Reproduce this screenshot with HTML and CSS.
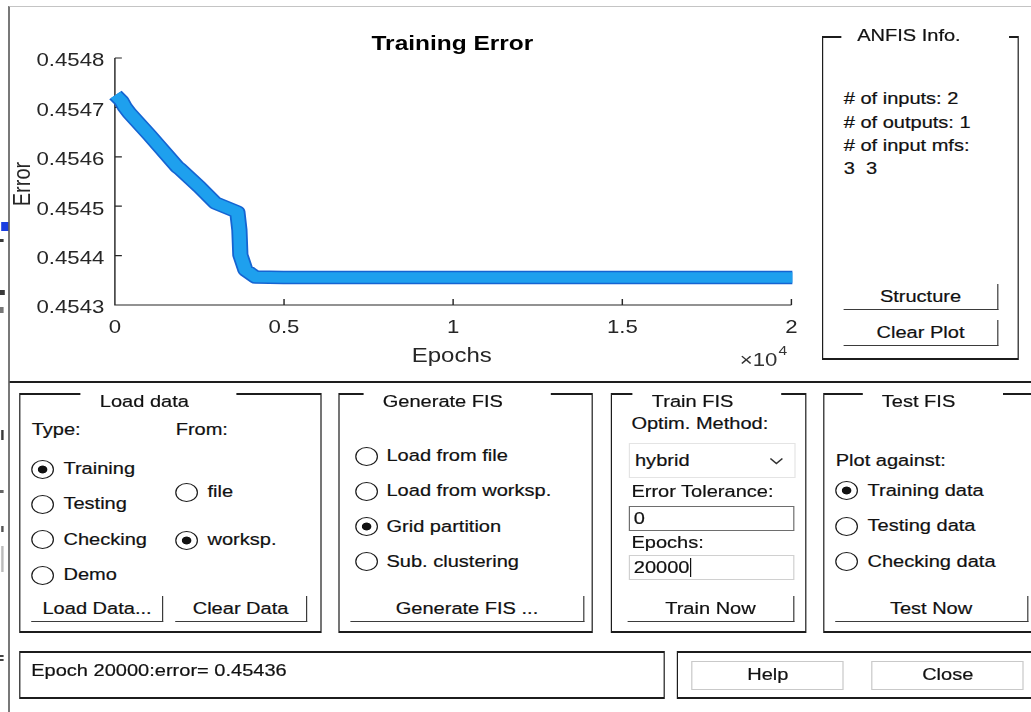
FILE: index.html
```html
<!DOCTYPE html>
<html lang="en">
<head>
<meta charset="utf-8">
<title>Neuro-Fuzzy Designer</title>
<link rel="stylesheet" href="styles.css">
</head>
<body>
<div class="screen">
  <!-- edge of the window underneath -->
  <div class="gutter" aria-hidden="true">
    <span class="mark mark--blue"></span>
    <span class="mark mark--a"></span>
    <span class="mark mark--b"></span>
    <span class="mark mark--c"></span>
    <span class="mark mark--d"></span>
    <span class="mark mark--e"></span>
    <span class="mark mark--f"></span>
    <span class="mark mark--g"></span>
    <span class="mark mark--h"></span>
  </div>

  <div class="window">
    <div class="upper">
      <svg class="plot" width="672" height="374" viewBox="0 0 672 374" role="img" aria-label="Training error plot">
        <text class="plot-title" x="369" y="43" text-anchor="middle">Training Error</text>
        <g class="axis">
          <path d="M87.75 51 V298 H651.5"/>
          <path d="M87.75 51 h5.8 M87.75 100.4 h5.8 M87.75 149.8 h5.8 M87.75 199.2 h5.8 M87.75 248.6 h5.8 M228.7 298 v-6 M369.6 298 v-6 M510.6 298 v-6 M651.5 298 v-6"/>
        </g>
        <g class="tick-labels" text-anchor="end">
          <text x="79" y="59.5">0.4548</text>
          <text x="79" y="108.9">0.4547</text>
          <text x="79" y="158.3">0.4546</text>
          <text x="79" y="207.7">0.4545</text>
          <text x="79" y="257.1">0.4544</text>
          <text x="79" y="306.5">0.4543</text>
        </g>
        <g class="tick-labels" text-anchor="middle">
          <text x="87.75" y="326">0</text>
          <text x="228.7" y="326">0.5</text>
          <text x="369.6" y="326">1</text>
          <text x="510.6" y="326">1.5</text>
          <text x="651.5" y="326">2</text>
        </g>
        <text class="axis-label" x="368.5" y="355" text-anchor="middle">Epochs</text>
        <text class="axis-label" transform="translate(16.8 177) rotate(-90)" text-anchor="middle">Error</text>
        <text class="exponent" x="639.8" y="359" text-anchor="end">×10</text>
        <text class="exponent-power" x="640.7" y="348">4</text>
        <path class="curve-edge" d="M88.2 88 L93.2 94 L96 100 L99.8 106 L116.5 128 L139.8 160 L142 162 L158.2 180 L171.5 196 L189.8 205 L191.5 223 L192.3 248 L196.5 263 L204.8 270 L228.2 270.5 L652.3 270.5"/>
        <path class="curve" d="M88.2 88 L93.2 94 L96 100 L99.8 106 L116.5 128 L139.8 160 L142 162 L158.2 180 L171.5 196 L189.8 205 L191.5 223 L192.3 248 L196.5 263 L204.8 270 L228.2 270.5 L652.3 270.5"/>
      </svg>

      <section class="panel info-panel">
        <span class="panel-title">ANFIS Info.</span>
        <div class="info-text">
          <div># of inputs: 2</div>
          <div># of outputs: 1</div>
          <div># of input mfs:</div>
          <div>3&nbsp;&nbsp;3</div>
        </div>
        <div class="info-actions">
          <button class="btn btn--info" type="button">Structure</button>
          <button class="btn btn--info" type="button">Clear Plot</button>
        </div>
      </section>
    </div>

    <div class="lower">
      <div class="panels">
        <section class="panel load-panel">
          <span class="panel-title">Load data</span>
          <div class="load-body">
            <div class="load-col">
              <span class="caption">Type:</span>
              <div class="radio-list type-list">
                <span class="radio is-on">Training</span>
                <span class="radio">Testing</span>
                <span class="radio">Checking</span>
                <span class="radio">Demo</span>
              </div>
            </div>
            <div class="load-col">
              <span class="caption">From:</span>
              <div class="radio-list source-list">
                <span class="radio">file</span>
                <span class="radio is-on">worksp.</span>
              </div>
            </div>
          </div>
          <div class="actions load-actions">
            <button class="btn btn--load" type="button">Load Data...</button>
            <button class="btn btn--clear" type="button">Clear Data</button>
          </div>
        </section>

        <section class="panel gen-panel">
          <span class="panel-title">Generate FIS</span>
          <div class="radio-list gen-list">
            <span class="radio">Load from file</span>
            <span class="radio">Load from worksp.</span>
            <span class="radio is-on">Grid partition</span>
            <span class="radio">Sub. clustering</span>
          </div>
          <div class="actions gen-actions">
            <button class="btn btn--gen" type="button">Generate FIS ...</button>
          </div>
        </section>

        <section class="panel train-panel">
          <span class="panel-title">Train FIS</span>
          <div class="train-body">
            <span class="caption">Optim. Method:</span>
            <div class="select">
              <span>hybrid</span>
              <svg class="chevron" width="12" height="8" viewBox="0 0 12 8" aria-hidden="true"><polyline points="1,1.5 6,6.5 11,1.5"/></svg>
            </div>
            <span class="caption caption--gap">Error Tolerance:</span>
            <div class="field field--dark">0</div>
            <span class="caption caption--close">Epochs:</span>
            <div class="field field--light">20000<span class="caret"></span></div>
          </div>
          <div class="actions train-actions">
            <button class="btn btn--train" type="button">Train Now</button>
          </div>
        </section>

        <section class="panel test-panel">
          <span class="panel-title">Test FIS</span>
          <div class="test-body">
            <span class="caption">Plot against:</span>
            <div class="radio-list test-list">
              <span class="radio is-on">Training data</span>
              <span class="radio">Testing data</span>
              <span class="radio">Checking data</span>
            </div>
          </div>
          <div class="actions test-actions">
            <button class="btn btn--test" type="button">Test Now</button>
          </div>
        </section>
      </div>

      <div class="footer">
        <div class="status">Epoch 20000:error= 0.45436</div>
        <div class="dialog-actions">
          <button class="btn-flat" type="button">Help</button>
          <button class="btn-flat" type="button">Close</button>
        </div>
      </div>
    </div>
  </div>
</div>
</body>
</html>
```

FILE: styles.css
```css
* {
  box-sizing: border-box;
}

html,
body {
  margin: 0;
  padding: 0;
  background: #fff;
}

body {
  width: 1031px;
  height: 712px;
  overflow: hidden;
  font-family: "Liberation Sans", Arial, Helvetica, sans-serif;
  font-size: 16.7px;
  color: #111;
}

/* the dialog is drawn on a 1.2x horizontally stretched canvas */
.screen {
  width: 859.2px;
  height: 712px;
  padding-top: 6px;
  display: flex;
  transform: scaleX(1.2);
  transform-origin: 0 0;
}

/* sliver of the window behind, along the left edge */
.gutter {
  flex: none;
  width: 7px;
  display: flex;
  flex-direction: column;
  align-items: flex-start;
}

.mark {
  display: block;
  flex: none;
  background: #3a3a3a;
}

.mark--blue { margin-top: 216px; width: 5.6px; height: 9px; margin-left: 1px; background: #1a3ee0; }
.mark--a { margin-top: 8px; width: 3px; height: 3px; }
.mark--b { margin-top: 48px; width: 4px; height: 5px; }
.mark--c { margin-top: 12px; width: 3px; height: 6px; background: #777; }
.mark--d { margin-top: 117px; width: 2px; height: 10px; margin-left: 1px; }
.mark--e { margin-top: 50px; width: 3px; height: 3px; background: #666; }
.mark--f { margin-top: 33px; width: 2px; height: 6px; margin-left: 1px; background: #555; }
.mark--g { margin-top: 14px; width: 2px; height: 26px; margin-left: 1px; background: #bbb; }
.mark--h { margin-top: 83px; width: 3px; height: 6px; border-top: 2px solid #444; border-bottom: 2px solid #444; background: transparent; }

.window {
  flex: 1;
  height: 706px;
  border-top: 1px solid #c4c4c4;
  border-left: 1.5px solid #1e1e1e;
  display: flex;
  flex-direction: column;
  -webkit-text-stroke: 0.2px #111;
}

.upper {
  flex: none;
  height: 376px;
  border-bottom: 2px solid #1e1e1e;
  display: flex;
  align-items: flex-start;
}

/* ---------- plot ---------- */
.plot {
  flex: none;
  display: block;
  overflow: visible;
  font-family: "Liberation Sans", Arial, Helvetica, sans-serif;
  -webkit-text-stroke: 0;
}

.plot-title {
  font-size: 20.4px;
  font-weight: bold;
  fill: #000;
}

.axis path {
  fill: none;
  stroke: #262626;
  stroke-width: 1.2;
}

.tick-labels text {
  font-size: 18.5px;
  fill: #262626;
}

.axis-label {
  font-size: 20px;
  fill: #262626;
}

.exponent {
  font-size: 18.5px;
  fill: #333;
}

.exponent-power {
  font-size: 13px;
  fill: #333;
}

.curve-edge,
.curve {
  fill: none;
  stroke-linejoin: round;
  stroke-linecap: butt;
}

.curve-edge {
  stroke: #1564d2;
  stroke-width: 13.5;
}

.curve {
  stroke: #1ea0ee;
  stroke-width: 10.5;
}

/* ---------- group boxes ---------- */
.panel {
  position: relative;
  border: 2px solid #1c1c1c;
  border-left-width: 1.6px;
  border-right-width: 1.6px;
  display: flex;
  flex-direction: column;
  background: #fff;
}

.panel-title {
  position: absolute;
  top: -2px;
  background: #fff;
  padding: 0 40px 0 16px;
  line-height: 18px;
  white-space: nowrap;
}

.info-panel .panel-title {
  top: -11px;
  left: 15px;
  padding-left: 13px;
}

.load-panel .panel-title { left: 50px; }
.gen-panel .panel-title { left: 20px; }
.train-panel .panel-title { left: 17.5px; }
.test-panel .panel-title { left: 31.7px; }

.caption {
  display: block;
  height: 20px;
  line-height: 20px;
  white-space: nowrap;
}

.radio-list {
  display: flex;
  flex-direction: column;
}

.radio {
  display: flex;
  align-items: center;
  gap: 7.5px;
  height: 35.3px;
  line-height: 20px;
  white-space: nowrap;
}

.radio::before {
  content: "";
  flex: none;
  width: 17px;
  height: 17px;
  border: 1.5px solid #1a1a1a;
  border-radius: 50%;
  background: #fff;
}

.radio.is-on::before {
  background: radial-gradient(circle, #111 0 3.6px, #fff 4.3px);
}

.actions {
  margin-top: auto;
  display: flex;
  padding-bottom: 9px;
}

.btn {
  flex: none;
  height: 26px;
  margin: 0;
  padding: 0;
  border: 0;
  border-right: 1.5px solid #3b3b3b;
  border-bottom: 1.5px solid #3b3b3b;
  background: #fff;
  font: inherit;
  color: #111;
  line-height: 20px;
  text-align: center;
}

/* ANFIS info */
.info-panel {
  flex: none;
  width: 164.2px;
  height: 324px;
  margin: 29px 0 0 5.3px;
  padding: 49.3px 0 12px 16.8px;
}

.info-text {
  line-height: 23.3px;
}

.info-text div {
  white-space: nowrap;
}

.info-actions {
  margin-top: auto;
  display: flex;
  flex-direction: column;
  gap: 10px;
}

.btn--info {
  width: 129px;
}

/* ---------- lower area ---------- */
.lower {
  flex: 1;
  padding: 10px 0 0 8.2px;
}

.panels {
  display: grid;
  grid-template-columns: 251.6px 212.5px 163.3px 177px;
  column-gap: 14.2px;
  height: 240px;
}

/* Load data */
.load-body {
  display: grid;
  grid-template-columns: 120px 1fr;
  padding: 25px 0 0 9.2px;
}

.type-list {
  margin-top: 11.5px;
}

.source-list {
  margin-top: 34.4px;
  gap: 12.7px;
}

.load-actions {
  gap: 9.2px;
  padding-left: 9.2px;
}

.btn--load { width: 110px; }
.btn--clear { width: 110.8px; }

/* Generate FIS */
.gen-list {
  padding: 43.4px 0 0 12.6px;
}

.gen-actions {
  padding-left: 9.2px;
}

.btn--gen { width: 195px; }

/* Train FIS */
.train-body {
  display: flex;
  flex-direction: column;
  padding: 19px 0 0 14.5px;
}

.train-body .caption {
  padding-left: 2px;
}

.caption--gap { margin-top: 4px; }
.caption--close { margin-top: 2px; }

.select {
  margin-top: 9px;
  width: 138.4px;
  height: 35px;
  border: 1px solid #e4e4e4;
  display: flex;
  align-items: center;
  justify-content: space-between;
  padding: 0 9px 0 4px;
}

.chevron polyline {
  fill: none;
  stroke: #333;
  stroke-width: 1.3;
}

.field {
  width: 137.5px;
  height: 25px;
  display: flex;
  align-items: center;
  padding-left: 3px;
  background: #fff;
}

.field--dark {
  margin-top: 4px;
  border: 1.5px solid #6e6e6e;
}

.field--light {
  margin-top: 2px;
  border: 1.5px solid #d0d0d0;
}

.caret {
  width: 1px;
  height: 19px;
  background: #111;
  margin-left: 0.5px;
}

.train-actions {
  padding-left: 13.4px;
}

.btn--train { width: 139px; }

/* Test FIS */
.test-body {
  padding: 56px 0 0 9.3px;
}

.test-list {
  margin-top: 2.3px;
}

.test-actions {
  padding-left: 8.4px;
}

.btn--test { width: 161.7px; }

/* ---------- footer ---------- */
.footer {
  display: flex;
  gap: 10px;
  margin-top: 18px;
  height: 48px;
}

.status {
  flex: none;
  width: 537.5px;
  height: 48px;
  border: 2px solid #1c1c1c;
  border-left-width: 1.6px;
  border-right-width: 1.6px;
  padding: 8px 0 0 8.8px;
  line-height: 20px;
}

.dialog-actions {
  flex: none;
  width: 300px;
  height: 48px;
  border: 2px solid #1c1c1c;
  border-left-width: 1.6px;
  border-right-width: 1.6px;
  display: flex;
  align-items: center;
  gap: 23.3px;
  padding-left: 11.8px;
}

.btn-flat {
  flex: none;
  width: 126.7px;
  height: 29px;
  margin: 0;
  padding: 0;
  border: 1.5px solid #c9c9c9;
  background: #fff;
  font: inherit;
  color: #111;
}
```
